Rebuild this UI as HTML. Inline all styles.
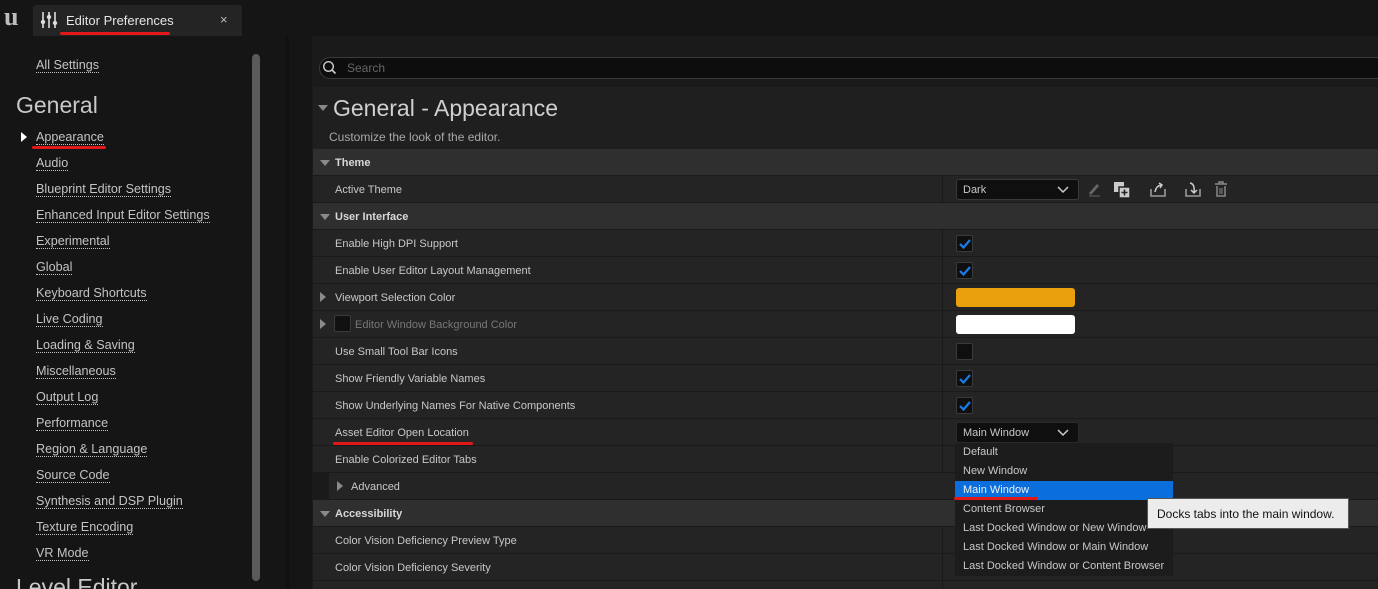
<!DOCTYPE html>
<html><head><meta charset="utf-8"><style>
*{margin:0;padding:0;box-sizing:border-box}
html{width:1378px;height:589px;overflow:hidden}
body{width:1378px;height:589px;overflow:hidden;background:#151515;font-family:"Liberation Sans",sans-serif;position:relative;color:#c0c0c0}
.a{position:absolute}
.nav{position:absolute;left:36px;font-size:12.6px;color:#c4c4c4;border-bottom:1px dotted #c4c4c4;line-height:14px;white-space:nowrap}
.row{position:absolute;left:313px;width:1065px;height:26px;background:#242424}
.cat{background:#2f2f2f}
.lbl{position:absolute;left:22px;top:8px;font-size:11px;color:#c8c8c8;white-space:nowrap}
.cat .lbl{font-weight:bold;color:#d8d8d8}
.vline{position:absolute;left:629px;top:0;width:1px;height:26px;background:#1a1a1a}
.tri{position:absolute;left:7px;top:10px;width:0;height:0;border-left:5px solid transparent;border-right:5px solid transparent;border-top:6px solid #8a8a8a}
.trr{position:absolute;left:7px;top:8px;width:0;height:0;border-top:5px solid transparent;border-bottom:5px solid transparent;border-left:6px solid #8a8a8a}
.cb{position:absolute;left:643px;top:5px;width:17px;height:17px;background:#0f0f0f;border:1px solid #3a3a3a;border-radius:2px}
.cb svg{position:absolute;left:2px;top:2px}
.dd{position:absolute;font-size:11px;color:#c8c8c8;white-space:nowrap}
.red{position:absolute;height:3px;background:#e01818;border-radius:2px}
</style></head><body>
<div class="a" style="left:4px;top:4px;font-family:'Liberation Serif',serif;font-size:26px;font-weight:bold;color:#bdbdbd;line-height:26px">u</div>
<div class="a" style="left:33px;top:5px;width:209px;height:31px;background:#242424;border-radius:3px 3px 0 0"></div>
<svg class="a" style="left:40px;top:11px" width="18" height="18" viewBox="0 0 18 18"><g stroke="#ddd" stroke-width="1.6"><line x1="3" y1="1" x2="3" y2="17"/><line x1="9" y1="1" x2="9" y2="17"/><line x1="15" y1="1" x2="15" y2="17"/></g><g fill="#ddd"><circle cx="3" cy="11" r="2.2"/><circle cx="9" cy="6" r="2.2"/><circle cx="15" cy="12" r="2.2"/></g></svg>
<div class="a" style="left:66px;top:13px;font-size:13px;color:#e6e6e6">Editor Preferences</div>
<div class="a" style="left:220px;top:12px;font-size:13px;color:#bbb">×</div>
<div class="red" style="left:60px;top:32px;width:110px"></div>
<div class="nav" style="top:58px">All Settings</div>
<div class="a" style="left:16px;top:92px;font-size:23px;color:#c8c8c8">General</div>
<div class="a" style="left:21px;top:132px;width:0;height:0;border-top:5px solid transparent;border-bottom:5px solid transparent;border-left:6px solid #fff"></div>
<div class="nav" style="top:130px">Appearance</div>
<div class="red" style="left:32px;top:146px;width:74px"></div>
<div class="nav" style="top:156px">Audio</div>
<div class="nav" style="top:182px">Blueprint Editor Settings</div>
<div class="nav" style="top:208px">Enhanced Input Editor Settings</div>
<div class="nav" style="top:234px">Experimental</div>
<div class="nav" style="top:260px">Global</div>
<div class="nav" style="top:286px">Keyboard Shortcuts</div>
<div class="nav" style="top:312px">Live Coding</div>
<div class="nav" style="top:338px">Loading &amp; Saving</div>
<div class="nav" style="top:364px">Miscellaneous</div>
<div class="nav" style="top:390px">Output Log</div>
<div class="nav" style="top:416px">Performance</div>
<div class="nav" style="top:442px">Region &amp; Language</div>
<div class="nav" style="top:468px">Source Code</div>
<div class="nav" style="top:494px">Synthesis and DSP Plugin</div>
<div class="nav" style="top:520px">Texture Encoding</div>
<div class="nav" style="top:546px">VR Mode</div>
<div class="a" style="left:16px;top:574px;font-size:23px;color:#c8c8c8">Level Editor</div>
<div class="a" style="left:252px;top:54px;width:8px;height:527px;background:#5a5a5a;border-radius:4px"></div>
<div class="a" style="left:286px;top:36px;width:3px;height:553px;background:#111"></div>
<div class="a" style="left:312px;top:36px;width:1066px;height:553px;background:#1a1a1a"></div>
<div class="a" style="left:319px;top:57px;width:1070px;height:22px;background:#0d0d0d;border:1px solid #3a3a3a;border-radius:11px"></div>
<svg class="a" style="left:322px;top:60px" width="16" height="16" viewBox="0 0 16 16"><circle cx="6.5" cy="6.5" r="4.8" fill="none" stroke="#ccc" stroke-width="1.4"/><line x1="10" y1="10" x2="13.5" y2="13.5" stroke="#ccc" stroke-width="1.6"/></svg>
<div class="a" style="left:347px;top:61px;font-size:12px;color:#666">Search</div>
<div class="a" style="left:313px;top:87px;width:1065px;height:62px;background:#1f1f1f"></div>
<div class="a" style="left:318px;top:105px;width:0;height:0;border-left:5px solid transparent;border-right:5px solid transparent;border-top:6px solid #888"></div>
<div class="a" style="left:333px;top:95px;font-size:23px;color:#cfcfcf">General - Appearance</div>
<div class="a" style="left:329px;top:130px;font-size:12px;color:#a8a8a8">Customize the look of the editor.</div>

<div class="row cat" style="top:149px"><div class="tri" style="top:11px"></div><div class="lbl">Theme</div></div>
<div class="row" style="top:176px"><div class="lbl">Active Theme</div><div class="vline"></div>
 <div class="a" style="left:643px;top:3px;width:123px;height:21px;background:#0f0f0f;border:1px solid #3a3a3a;border-radius:3px"><span class="dd" style="left:6px;top:4px">Dark</span><svg class="a" style="left:100px;top:6px" width="12" height="8"><polyline points="1,1 6,6 11,1" fill="none" stroke="#ccc" stroke-width="1.5"/></svg></div>
 <svg class="a" style="left:773px;top:5px" width="16" height="16"><path d="M3 12 L11 3 L13 5 L5 14 Z" fill="#666"/><line x1="3" y1="15" x2="14" y2="15" stroke="#666"/></svg>
 <svg class="a" style="left:800px;top:5px" width="18" height="18"><rect x="1" y="1" width="10" height="10" fill="#ccc"/><rect x="6" y="6" width="11" height="11" fill="#ccc" stroke="#242424" stroke-width="1.5"/><path d="M11.5 8.5v6M8.5 11.5h6" stroke="#242424" stroke-width="1.6"/></svg>
 <svg class="a" style="left:836px;top:5px" width="18" height="18"><path d="M2 8v7h14V8" fill="none" stroke="#999" stroke-width="1.6"/><path d="M6 11 Q7 5 12 4 M10 2l3 2-2 3" fill="none" stroke="#ccc" stroke-width="1.5"/></svg>
 <svg class="a" style="left:871px;top:5px" width="18" height="18"><path d="M2 8v7h14V8" fill="none" stroke="#999" stroke-width="1.6"/><path d="M6 2 Q11 3 10 11 M7 9l3 3 3-3" fill="none" stroke="#ccc" stroke-width="1.5"/></svg>
 <svg class="a" style="left:901px;top:5px" width="14" height="16"><path d="M1 3h12M5 3V1h4v2M3 5v10h8V5" fill="none" stroke="#888" stroke-width="1.5"/><path d="M6 7v6M8 7v6" stroke="#888"/></svg>
</div>
<div class="row cat" style="top:203px"><div class="tri" style="top:11px"></div><div class="lbl">User Interface</div></div>
<div class="row" style="top:230px"><div class="lbl">Enable High DPI Support</div><div class="vline"></div><div class="cb"><svg width="12" height="12"><polyline points="1,6 4.5,9.5 11,2" fill="none" stroke="#1a7ce8" stroke-width="2.2"/></svg></div></div>
<div class="row" style="top:257px"><div class="lbl">Enable User Editor Layout Management</div><div class="vline"></div><div class="cb"><svg width="12" height="12"><polyline points="1,6 4.5,9.5 11,2" fill="none" stroke="#1a7ce8" stroke-width="2.2"/></svg></div></div>
<div class="row" style="top:284px"><div class="trr"></div><div class="lbl">Viewport Selection Color</div><div class="vline"></div><div class="a" style="left:643px;top:4px;width:119px;height:19px;background:#e9a00c;border-radius:3px"></div></div>
<div class="row" style="top:311px"><div class="trr"></div><div class="a" style="left:21px;top:4px;width:17px;height:17px;background:#111;border:1px solid #3a3a3a;border-radius:2px"></div><div class="lbl" style="left:42px;color:#777">Editor Window Background Color</div><div class="vline"></div><div class="a" style="left:643px;top:4px;width:119px;height:19px;background:#fff;border-radius:3px"></div></div>
<div class="row" style="top:338px"><div class="lbl">Use Small Tool Bar Icons</div><div class="vline"></div><div class="cb"></div></div>
<div class="row" style="top:365px"><div class="lbl">Show Friendly Variable Names</div><div class="vline"></div><div class="cb"><svg width="12" height="12"><polyline points="1,6 4.5,9.5 11,2" fill="none" stroke="#1a7ce8" stroke-width="2.2"/></svg></div></div>
<div class="row" style="top:392px"><div class="lbl">Show Underlying Names For Native Components</div><div class="vline"></div><div class="cb"><svg width="12" height="12"><polyline points="1,6 4.5,9.5 11,2" fill="none" stroke="#1a7ce8" stroke-width="2.2"/></svg></div></div>
<div class="row" style="top:419px"><div class="lbl">Asset Editor Open Location</div><div class="vline"></div>
 <div class="a" style="left:643px;top:3px;width:123px;height:21px;background:#0f0f0f;border:1px solid #2a2a2a;border-radius:3px"><span class="dd" style="left:6px;top:4px">Main Window</span><svg class="a" style="left:100px;top:6px" width="12" height="8"><polyline points="1,1 6,6 11,1" fill="none" stroke="#ccc" stroke-width="1.5"/></svg></div>
</div>
<div class="red" style="left:333px;top:442px;width:140px"></div>
<div class="row" style="top:446px"><div class="lbl">Enable Colorized Editor Tabs</div><div class="vline"></div></div>
<div class="row" style="top:473px;background:#1a1a1a"><div class="a" style="left:16px;top:0;width:1049px;height:26px;background:#242424"></div><div class="trr" style="left:24px"></div><div class="lbl" style="left:38px">Advanced</div></div>
<div class="row cat" style="top:500px"><div class="tri" style="top:11px"></div><div class="lbl">Accessibility</div></div>
<div class="row" style="top:527px"><div class="lbl">Color Vision Deficiency Preview Type</div><div class="vline"></div></div>
<div class="row" style="top:554px"><div class="lbl">Color Vision Deficiency Severity</div><div class="vline"></div></div>
<div class="row" style="top:581px;height:8px"><div class="vline"></div></div>
<div class="a" style="left:955px;top:443px;width:218px;height:133px;background:#1c1c1c;border-radius:2px"></div>
<div class="a" style="left:955px;top:481px;width:218px;height:19px;background:#0a6fdc"></div>
<div class="dd" style="left:963px;top:446px">Default</div>
<div class="dd" style="left:963px;top:465px">New Window</div>
<div class="dd" style="left:963px;top:484px;color:#f0f0f0">Main Window</div>
<div class="red" style="left:954px;top:497px;width:84px"></div>
<div class="dd" style="left:963px;top:503px">Content Browser</div>
<div class="dd" style="left:963px;top:522px">Last Docked Window or New Window</div>
<div class="dd" style="left:963px;top:541px">Last Docked Window or Main Window</div>
<div class="dd" style="left:963px;top:560px">Last Docked Window or Content Browser</div>
<div class="a" style="left:1147px;top:498px;width:202px;height:31px;background:#ececec;border:1px solid #555"><span class="a" style="left:9px;top:8px;font-size:12px;color:#111;white-space:nowrap">Docks tabs into the main window.</span></div>
</body></html>
